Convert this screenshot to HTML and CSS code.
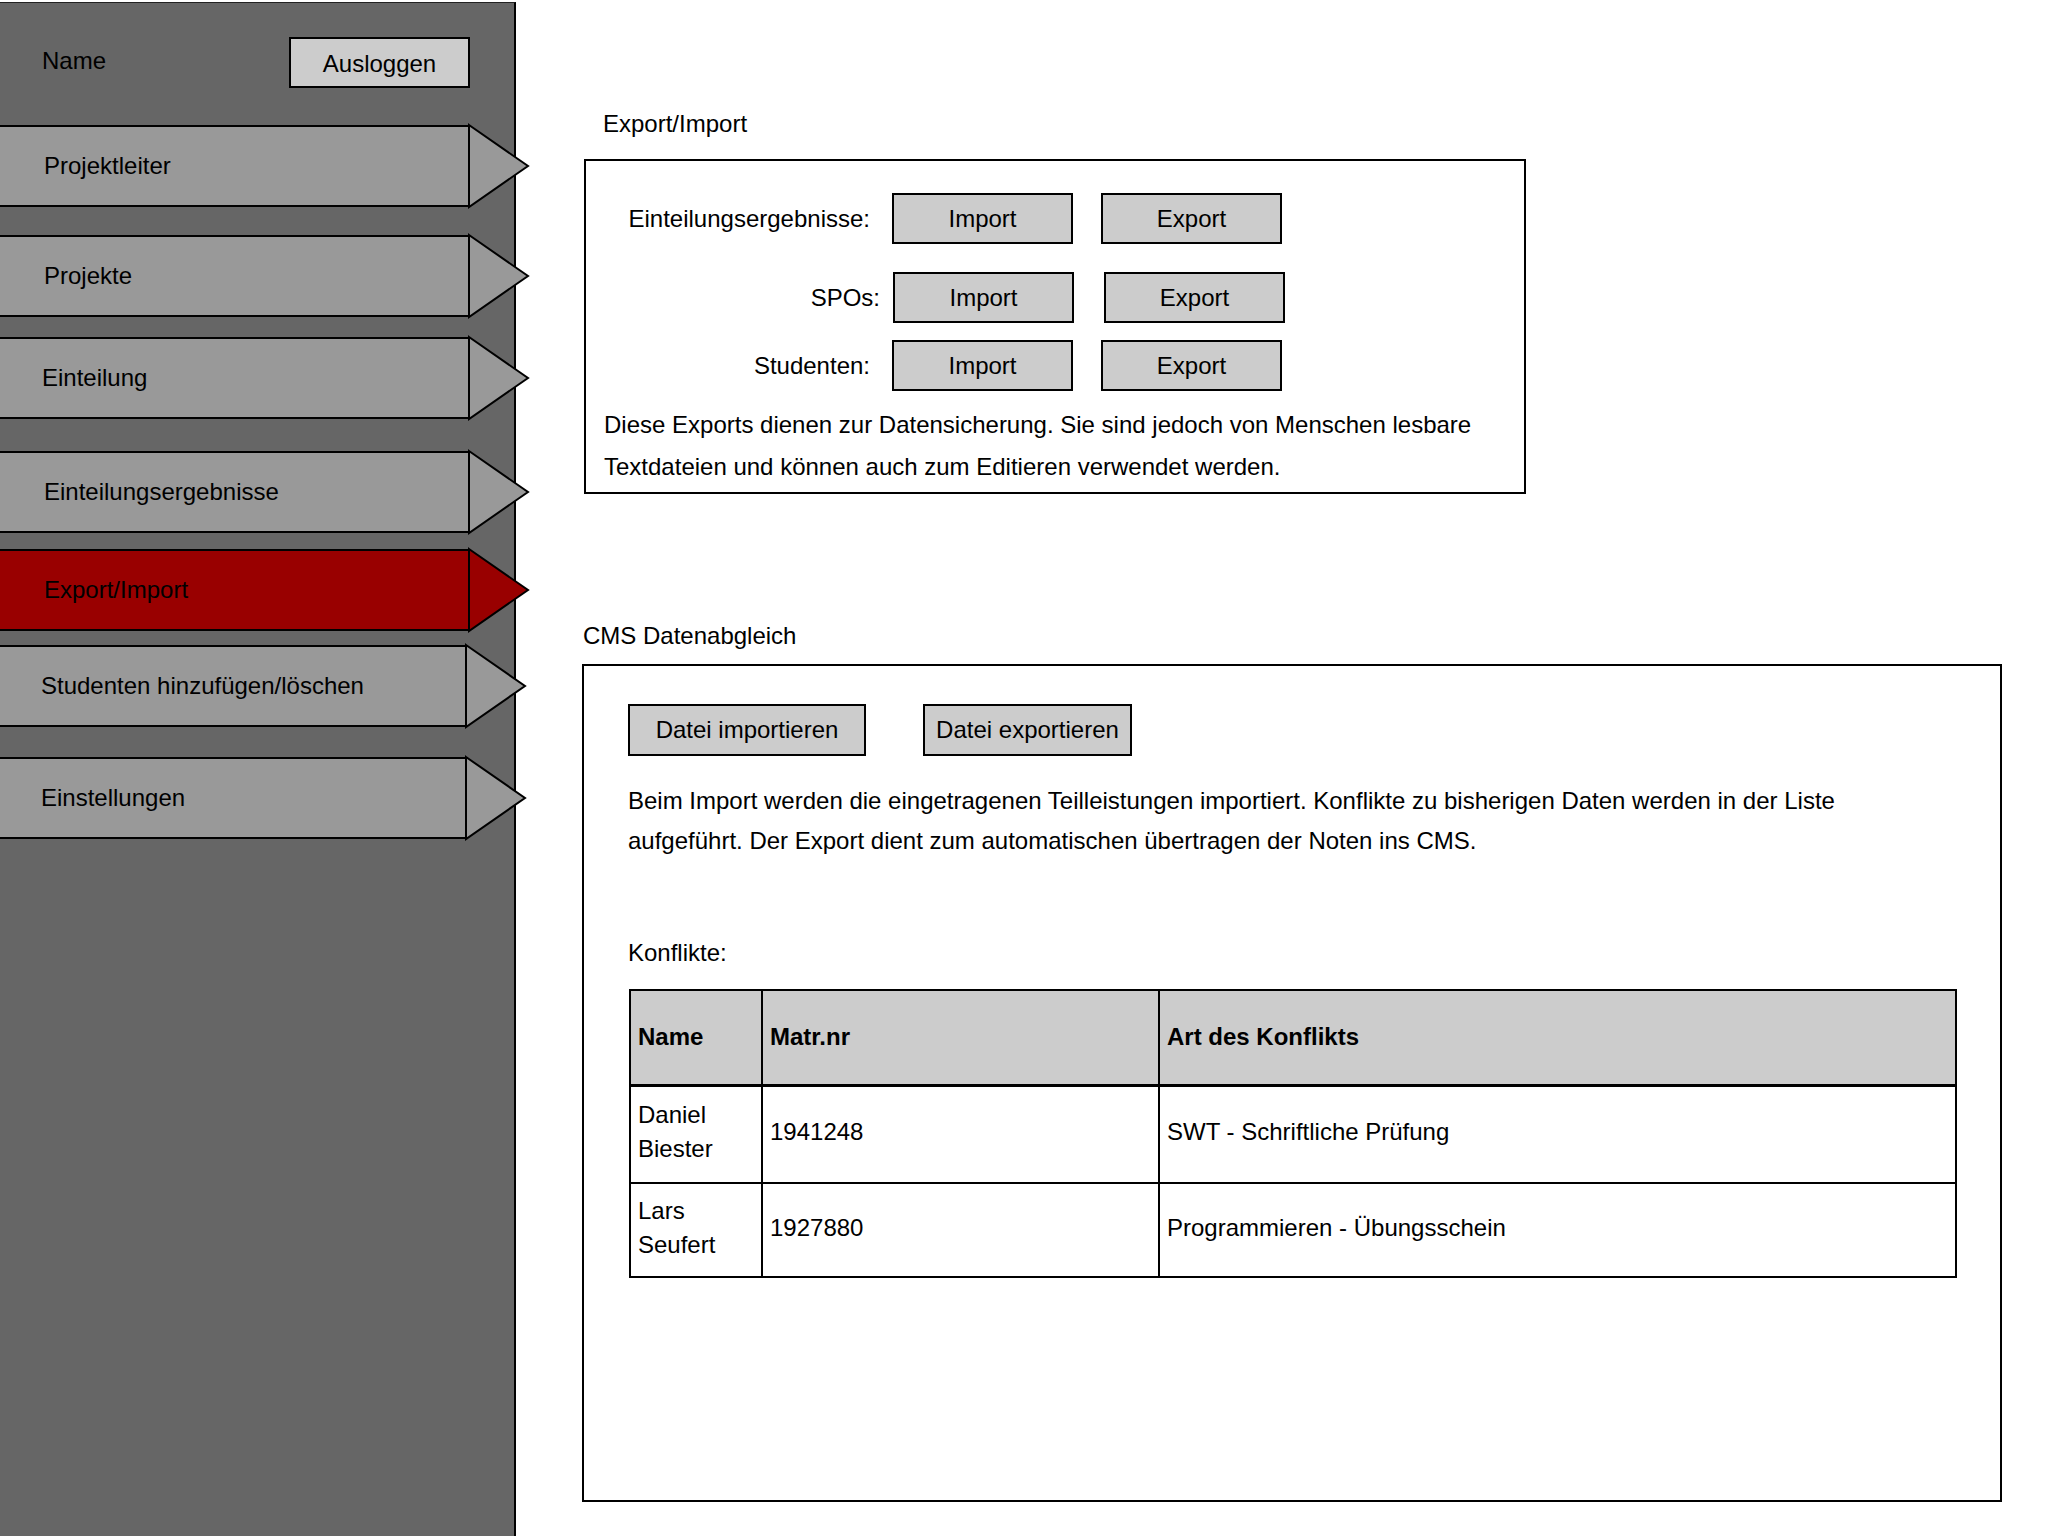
FILE: index.html
```html
<!DOCTYPE html>
<html lang="de">
<head>
<meta charset="utf-8">
<title>Export/Import</title>
<link rel="stylesheet" href="styles.css">
</head>
<body>
<div class="app">
  <aside class="sidebar">
    <div class="user-row">
      <span class="user-name">Name</span>
      <button class="btn btn-logout">Ausloggen</button>
    </div>
    <nav class="nav">
      <div class="nav-item nav-1"><div class="nav-body">Projektleiter</div><svg class="nav-arrow" viewBox="0 0 62 82" width="62" height="82"><polygon points="1,0 60,41 1,82"/></svg></div>
      <div class="nav-item nav-2"><div class="nav-body">Projekte</div><svg class="nav-arrow" viewBox="0 0 62 82" width="62" height="82"><polygon points="1,0 60,41 1,82"/></svg></div>
      <div class="nav-item nav-3"><div class="nav-body">Einteilung</div><svg class="nav-arrow" viewBox="0 0 62 82" width="62" height="82"><polygon points="1,0 60,41 1,82"/></svg></div>
      <div class="nav-item nav-4"><div class="nav-body">Einteilungsergebnisse</div><svg class="nav-arrow" viewBox="0 0 62 82" width="62" height="82"><polygon points="1,0 60,41 1,82"/></svg></div>
      <div class="nav-item nav-5 active"><div class="nav-body">Export/Import</div><svg class="nav-arrow" viewBox="0 0 62 82" width="62" height="82"><polygon points="1,0 60,41 1,82"/></svg></div>
      <div class="nav-item nav-6 shifted"><div class="nav-body">Studenten hinzufügen/löschen</div><svg class="nav-arrow" viewBox="0 0 62 82" width="62" height="82"><polygon points="1,0 60,41 1,82"/></svg></div>
      <div class="nav-item nav-7 shifted"><div class="nav-body">Einstellungen</div><svg class="nav-arrow" viewBox="0 0 62 82" width="62" height="82"><polygon points="1,0 60,41 1,82"/></svg></div>
    </nav>
  </aside>

  <main class="main">
    <h2 class="section-title title-export">Export/Import</h2>
    <section class="panel panel-export">
      <div class="io-row io-row-1">
        <span class="io-label">Einteilungsergebnisse:</span>
        <button class="btn btn-io">Import</button>
        <button class="btn btn-io">Export</button>
      </div>
      <div class="io-row io-row-2">
        <span class="io-label">SPOs:</span>
        <button class="btn btn-io">Import</button>
        <button class="btn btn-io">Export</button>
      </div>
      <div class="io-row io-row-3">
        <span class="io-label">Studenten:</span>
        <button class="btn btn-io">Import</button>
        <button class="btn btn-io">Export</button>
      </div>
      <p class="panel-text">Diese Exports dienen zur Datensicherung. Sie sind jedoch von Menschen lesbare Textdateien und können auch zum Editieren verwendet werden.</p>
    </section>

    <h2 class="section-title title-cms">CMS Datenabgleich</h2>
    <section class="panel panel-cms">
      <div class="file-buttons">
        <button class="btn btn-file btn-file-import">Datei importieren</button>
        <button class="btn btn-file btn-file-export">Datei exportieren</button>
      </div>
      <p class="cms-text">Beim Import werden die eingetragenen Teilleistungen importiert. Konflikte zu bisherigen Daten werden in der Liste aufgeführt. Der Export dient zum automatischen übertragen der Noten ins CMS.</p>
      <div class="conflicts-label">Konflikte:</div>
      <table class="conflicts">
        <colgroup>
          <col class="col-name">
          <col class="col-matr">
          <col class="col-art">
        </colgroup>
        <thead>
          <tr><th>Name</th><th>Matr.nr</th><th>Art des Konflikts</th></tr>
        </thead>
        <tbody>
          <tr class="row-1"><td>Daniel Biester</td><td>1941248</td><td>SWT - Schriftliche Prüfung</td></tr>
          <tr class="row-2"><td>Lars Seufert</td><td>1927880</td><td>Programmieren - Übungsschein</td></tr>
        </tbody>
      </table>
    </section>
  </main>
</div>
</body>
</html>
```

FILE: styles.css
```css
* { box-sizing: border-box; }

html, body {
  margin: 0;
  padding: 0;
  background: #ffffff;
}

body {
  font-family: "Liberation Sans", Arial, Helvetica, sans-serif;
  font-size: 24px;
  color: #000000;
  overflow: hidden;
}

.app {
  display: flex;
  align-items: flex-start;
  width: 2048px;
  height: 1536px;
}

/* ---------- Sidebar ---------- */
.sidebar {
  flex: 0 0 516px;
  width: 516px;
  height: 1534px;
  margin-top: 2px;
  background: #666666;
  border-top: 1px solid #222222;
  border-right: 2px solid #000000;
  display: flex;
  flex-direction: column;
  position: relative;
  z-index: 1;
}

.user-row {
  display: flex;
  align-items: center;
  margin-top: 34px;
  padding-left: 42px;
  padding-right: 44px;
  height: 51px;
}

.user-name {
  line-height: 28px;
  margin-top: -4px;
}

.btn {
  font-family: inherit;
  font-size: 24px;
  color: #000000;
  background: #cccccc;
  border: 2px solid #000000;
  border-radius: 0;
  padding: 0;
  margin: 0;
  line-height: 28px;
  text-align: center;
}

.btn-logout {
  margin-left: auto;
  width: 181px;
  height: 51px;
  padding-top: 2px;
}

.nav {
  display: flex;
  flex-direction: column;
}

.nav-item {
  display: flex;
  align-items: stretch;
  height: 82px;
}

.nav-1 { margin-top: 37px; }
.nav-2 { margin-top: 28px; }
.nav-3 { margin-top: 20px; }
.nav-4 { margin-top: 32px; }
.nav-5 { margin-top: 16px; }
.nav-6 { margin-top: 14px; }
.nav-7 { margin-top: 30px; }

.nav-body {
  flex: 0 0 472px;
  margin-left: -2px;
  width: 472px;
  height: 82px;
  background: #999999;
  border: 2px solid #000000;
  padding-left: 44px;
  display: flex;
  align-items: center;
  line-height: 28px;
  white-space: nowrap;
}

.nav-3 .nav-body { padding-left: 42px; }

.nav-arrow {
  flex: 0 0 62px;
  margin-left: -2px;
  overflow: visible;
}

.nav-arrow polygon {
  fill: #999999;
  stroke: #000000;
  stroke-width: 2;
  stroke-linejoin: miter;
}

.nav-item.shifted .nav-body {
  margin-left: -5px;
}

.nav-item.active .nav-body {
  background: #990000;
}

.nav-item.active .nav-arrow polygon {
  fill: #990000;
}

/* ---------- Main ---------- */
.main {
  flex: 1 1 auto;
  display: flex;
  flex-direction: column;
  align-items: flex-start;
}

.section-title {
  margin: 0;
  font-size: 24px;
  font-weight: normal;
  line-height: 30px;
}

.title-export {
  margin-top: 109px;
  margin-left: 87px;
}

.title-cms {
  margin-top: 127px;
  margin-left: 67px;
}

.panel {
  background: #ffffff;
  border: 2px solid #000000;
}

.panel-export {
  margin-top: 20px;
  margin-left: 68px;
  width: 942px;
  padding: 32px 17px 4px 18px;
}

.io-row {
  display: flex;
  align-items: center;
  height: 51px;
}

.io-row-2 { margin-top: 28px; }
.io-row-3 { margin-top: 17px; }

.io-label {
  width: 266px;
  text-align: right;
  line-height: 28px;
}

.io-row-2 .io-label { width: 276px; }

.btn-io {
  width: 181px;
  height: 51px;
  margin-left: 22px;
}

.btn-io + .btn-io { margin-left: 28px; }

.io-row-2 .btn-io { margin-left: 13px; }
.io-row-2 .btn-io + .btn-io { margin-left: 30px; }

.panel-text {
  margin: 13px 0 0 0;
  line-height: 42px;
}

.panel-cms {
  margin-top: 13px;
  margin-left: 66px;
  width: 1420px;
  height: 838px;
  padding: 38px 44px 0 44px;
}

.file-buttons {
  display: flex;
  gap: 57px;
}

.btn-file {
  height: 52px;
}

.btn-file-import { width: 238px; }
.btn-file-export { width: 209px; }

.cms-text {
  margin: 25px 0 0 0;
  max-width: 1300px;
  line-height: 40px;
}

.conflicts-label {
  margin-top: 77px;
  line-height: 30px;
}

.conflicts {
  margin-top: 21px;
  margin-left: 1px;
  width: 1326px;
  border-collapse: collapse;
  table-layout: fixed;
  border: 2px solid #000000;
}

.col-name { width: 132px; }
.col-matr { width: 397px; }
.col-art { width: 797px; }

.conflicts th,
.conflicts td {
  border: 2px solid #000000;
  padding: 0 6px 0 7px;
  text-align: left;
  vertical-align: middle;
  font-size: 24px;
  line-height: 34px;
}

.conflicts th {
  background: #cccccc;
  font-weight: bold;
  height: 95px;
  border-bottom: 3px solid #000000;
}

.conflicts td {
  padding-bottom: 4px;
}

.conflicts .row-1 td { height: 98px; }
.conflicts .row-2 td { height: 94px; }
```
